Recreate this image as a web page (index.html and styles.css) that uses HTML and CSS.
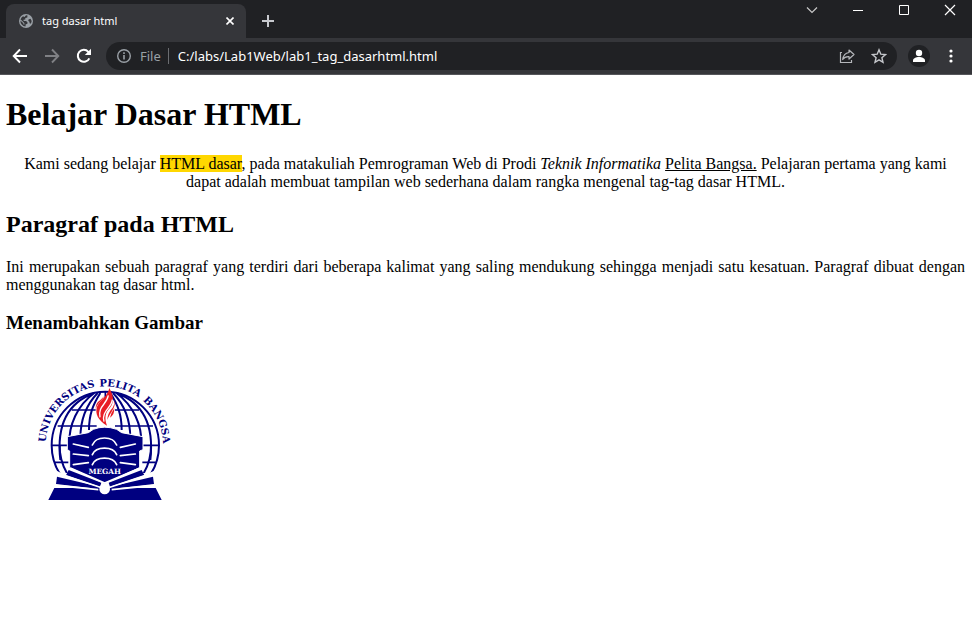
FILE: index.html
```html
<!DOCTYPE html>
<html lang="id">
<head>
<meta charset="utf-8">
<title>tag dasar html</title>
<link rel="stylesheet" href="styles.css">
</head>
<body>
<header class="browser">
  <div class="tabstrip">
    <div class="tab">
      <svg class="globe" viewBox="0 0 14 14" aria-hidden="true"><circle cx="7" cy="7" r="7" fill="#9aa0a6"/><path d="M8.500 1.500 8.300 3.500 6.300 4 6.300 5.500 4.500 5.800 4.700 7 7 7 8.500 8.300 8.300 10 6.700 10.300 6.500 12.600A5.700 5.700 0 0 1 1.400 6.500L4.300 9.300 4.500 10.500 5.500 10.500 5.300 9 2 5.800 1.500 6A5.700 5.700 0 0 1 4 2.300L5.500 3 7 1.300ZM9.500 5.500 11.500 4.800 12.700 7 12 9.500 10.800 9.500 10.300 7.500 9.300 7Z" fill="#35363a"/></svg>
      <span class="tab-title">tag dasar html</span>
      <button class="tab-close" aria-label="Close tab"><svg viewBox="0 0 8 8"><path d="M.5.5l7 7m0-7l-7 7" stroke="#fff" stroke-width="1.600"/></svg></button>
    </div>
    <button class="new-tab" aria-label="New tab"><svg viewBox="0 0 12 12"><path d="M6 0v12M0 6h12" stroke="#c8cacf" stroke-width="2"/></svg></button>
    <div class="window-controls">
      <button aria-label="Search tabs"><svg viewBox="0 0 12 12"><path d="M1 3.500l5 5 5-5" fill="none" stroke="#c8c8c8" stroke-width="1.200"/></svg></button>
      <button aria-label="Minimize"><svg viewBox="0 0 12 12"><path d="M1 6.500h10" stroke="#fff"/></svg></button>
      <button aria-label="Maximize"><svg viewBox="0 0 12 12"><path d="M1.500 1.500h9v9h-9z" fill="none" stroke="#fff"/></svg></button>
      <button aria-label="Close"><svg viewBox="0 0 12 12"><path d="M1 1l10 10M11 1L1 11" stroke="#fff" stroke-width="1.200"/></svg></button>
    </div>
  </div>
  <div class="toolbar">
    <nav class="nav-buttons">
      <button aria-label="Back"><svg viewBox="0 0 16 16"><path d="M15 8H2M8 1.500L1.700 8 8 14.500" fill="none" stroke="#fff" stroke-width="1.900"/></svg></button>
      <button aria-label="Forward"><svg viewBox="0 0 16 16"><path d="M1 8h13M8 1.500L14.300 8 8 14.500" fill="none" stroke="#808185" stroke-width="1.900"/></svg></button>
      <button aria-label="Reload"><svg viewBox="0 0 16 16"><path d="M13.300 10.300A6 6 0 1 1 12.300 3.800L14 5.500" fill="none" stroke="#fff" stroke-width="2"/><path d="M15 .8v6.200H8.800z" fill="#fff"/></svg></button>
    </nav>
    <div class="omnibox">
      <svg class="info" viewBox="0 0 14 14" aria-hidden="true"><circle cx="7" cy="7" r="6.300" fill="none" stroke="#9aa0a6" stroke-width="1.400"/><path d="M7 6v4.500M7 3.300v1.600" stroke="#9aa0a6" stroke-width="1.600"/></svg>
      <label class="scheme" for="url">File</label>
      <input id="url" class="url" type="text" value="C:/labs/Lab1Web/lab1_tag_dasarhtml.html">
      <button aria-label="Share"><svg viewBox="0 0 16 16"><path d="M3 4.500H1.500v10h11V12" fill="none" stroke="#b4b6ba" stroke-width="1.200"/><path d="M10 2l5 4.500-5 4.500V8.600C7 8.400 5 9.500 3.700 11.500 4.200 7.500 6.500 5 10 4.500z" fill="none" stroke="#b4b6ba" stroke-width="1.200" stroke-linejoin="round"/></svg></button>
      <button aria-label="Bookmark"><svg viewBox="0 0 16 16"><path d="M8 1.800l1.800 4.400 4.700.4-3.600 3.100 1.100 4.600L8 11.800l-4 2.500 1.100-4.600-3.600-3.100 4.700-.4z" fill="none" stroke="#c5c7cb" stroke-width="1.400"/></svg></button>
    </div>
    <button class="avatar" aria-label="Profile"><svg viewBox="0 0 22 22"><circle cx="11" cy="8" r="3.200" fill="#fff"/><path d="M5 17v-1.500c0-2.300 3-3.500 6-3.500s6 1.200 6 3.500V17z" fill="#fff"/></svg></button>
    <button class="menu" aria-label="Menu"><svg viewBox="0 0 4 14"><g fill="#fff"><circle cx="2" cy="2" r="1.600"/><circle cx="2" cy="7" r="1.600"/><circle cx="2" cy="12" r="1.600"/></g></svg></button>
  </div>
</header>
<main>
  <h1>Belajar Dasar HTML</h1>
  <p class="center">Kami sedang belajar <mark>HTML dasar</mark>, pada matakuliah Pemrograman Web di Prodi <i>Teknik Informatika</i> <u>Pelita Bangsa.</u> Pelajaran pertama yang kami dapat adalah membuat tampilan web sederhana dalam rangka mengenal tag-tag dasar HTML.</p>
  <h2>Paragraf pada HTML</h2>
  <p class="justify">Ini merupakan sebuah paragraf yang terdiri dari beberapa kalimat yang saling mendukung sehingga menjadi satu kesatuan. Paragraf dibuat dengan menggunakan tag dasar html.</p>
  <h3>Menambahkan Gambar</h3>
  <svg class="logo" viewBox="0 0 480 435" role="img" aria-label="Universitas Pelita Bangsa">
    <defs>
      <path id="arc" d="M62 240A176 176 0 0 1 414 240V280"/>
      <clipPath id="globe-top"><path d="M60 60H430V300L370 325H110L60 300Z"/></clipPath>
    </defs>
    <g class="ring-text">
      <text><textPath href="#arc" startOffset="8">UNIVERSITAS</textPath></text>
      <text><textPath href="#arc" startOffset="262">PELITA</textPath></text>
      <text><textPath href="#arc" startOffset="402">BANGSA</textPath></text>
    </g>
    <g clip-path="url(#globe-top)" fill="none" stroke="#000080" stroke-width="5">
      <circle cx="241" cy="241" r="161" stroke-width="6"/>
      <path d="M208 84C130 112 94 180 106 285M208 84C158 120 130 180 133 240M218 84C178 125 166 170 166 220M226 84C203 120 192 150 192 195" stroke-width="6"/>
      <path d="M274 84C352 112 388 180 376 285M274 84C324 120 352 180 349 240M264 84C304 125 316 170 316 220M256 84C279 120 290 150 290 195" stroke-width="6"/>
      <path d="M241 80V110M140 135H212M270 135H342M98 183H215M270 183H384M80 241H130M352 241H402M90 292H130M352 292H392"/>
      <path d="M104 240Q103 285 126 325M378 240Q379 285 356 325" stroke-width="6"/>
    </g>
    <path d="M127 215L190 203 205 193Q238 180 275 193L290 203 354 215V254L344 258V308L239 356 134 308V258L127 254Z" fill="#000080" stroke="#fff" stroke-width="3"/>
    <g fill="none" stroke="#fff" stroke-width="5" stroke-linecap="round">
      <path d="M202 240C213 212 264 212 275 240M202 269C213 243 264 243 275 269M202 299C213 273 264 273 275 299"/>
      <path d="M145 237L190 247M145 267L190 272M145 299L190 293M286 247L331 237M286 272L331 267M286 293L331 299"/>
    </g>
    <path d="M253 69C265 91 269 110 255 128C240 143 238 159 246 182C220 166 209 147 216 125C224 106 247 96 253 69Z" fill="#e81e25"/>
    <path d="M269 103C274 130 255 142 247 165Q247 145 263 128Q270 117 269 103M237 94C232 108 211 118 213 137Q208 116 226 105ZM268 130Q269 149 255 158Q257 145 268 130" fill="#e81e25"/>
    <path d="M250 91C245 119 218 124 225 157M262 104C260 129 228 139 237 170" fill="none" stroke="#fff" stroke-width="4"/>
    <text class="motto" x="239" y="327">MEGAH</text>
    <g fill="#000080">
      <path d="M131 315L229 353 225 365 123 331ZM350 315L251 353 255 365 358 331Z"/>
      <path d="M96 335L223 365V372L93 357ZM384 335L257 365V372L387 357Z"/>
      <path d="M88 369H392L410 405H70Z"/>
    </g>
    <path d="M136 309L239 354 345 309M118 331L225 367M362 331L255 367M90 361L220 374M390 361L260 374" fill="none" stroke="#fff" stroke-width="5"/>
    <circle cx="239" cy="372" r="16" fill="#fff"/>
  </svg>
</main>
</body>
</html>
```
FILE: styles.css
```css
* { box-sizing: border-box; }
body { margin: 0; background: #fff; color: #000; font-family: "Liberation Serif", serif; font-size: 16px; line-height: 18px; }
button { display: flex; align-items: center; justify-content: center; flex: none; padding: 0; border: 0; background: none; }
button svg { display: block; width: 16px; height: 16px; }

.browser { font-family: "Noto Sans", sans-serif; color: #fff; background: #202124; }
.tabstrip { display: flex; height: 38px; padding-left: 6px; }
.tab { display: flex; align-items: center; width: 240px; height: 34px; margin-top: 4px; padding: 0 8px 0 13px; background: #35363a; border-radius: 8px 8px 0 0; }
.globe { width: 14px; height: 14px; margin-right: 9px; }
.tab-title { flex: 1; font-family: "Noto Sans", sans-serif; font-size: 11px; }
.tab-close { width: 16px; height: 16px; }
.tab-close svg { width: 8px; height: 8px; }
.new-tab { width: 28px; height: 28px; margin: 7px 0 0 8px; }
.new-tab svg { width: 12px; height: 12px; }
.window-controls { display: flex; height: 20px; margin-left: auto; }
.window-controls button { width: 46px; padding-left: 2px; }
.window-controls svg { width: 12px; height: 12px; }

.toolbar { display: flex; align-items: center; height: 37px; padding: 0 19px 0 12px; background: #35363a; border-bottom: 1px solid #55565a; }
.nav-buttons { display: flex; gap: 16px; margin-right: 14px; }
.omnibox { display: flex; align-items: center; flex: 1; height: 28px; padding: 0 10px 0 11px; gap: 16px; border-radius: 14px; background: #202124; }
.info { flex: none; width: 14px; height: 14px; margin-right: -7px; }
.scheme { padding-right: 7px; border-right: 1px solid #6b6d71; color: #9aa0a6; font-size: 13px; line-height: 16px; margin-right: -7px; }
.url { flex: 1; min-width: 0; padding: 0; border: 0; outline: 0; background: none; color: #fff; font: 13px "Noto Sans", sans-serif; }
.avatar { width: 22px; height: 22px; margin-left: 11px; border-radius: 50%; background: #202124; }
.avatar svg { width: 22px; height: 22px; }
.menu { width: 4px; height: 16px; margin-left: 19px; }
.menu svg { width: 4px; height: 14px; }

main { padding: 1px 7px 0 6px; }
h1 { margin: 20px 0 22px; font-size: 32px; line-height: 37px; }
h2 { margin: 20px 0; font-size: 24px; line-height: 27px; }
h3 { margin: 18px 0; font-size: 19px; line-height: 22px; }
p { margin: 16px 0; }
.center { text-align: center; }
.justify { text-align: justify; }
mark { background: gold; color: inherit; }
.logo { display: block; width: 160px; height: 145px; margin: 31px 0 0 19px; }
.ring-text { font: bold 30px "DejaVu Serif", serif; fill: #000080; }
.motto { font: bold 22px "DejaVu Serif", serif; fill: #fff; text-anchor: middle; }
```
